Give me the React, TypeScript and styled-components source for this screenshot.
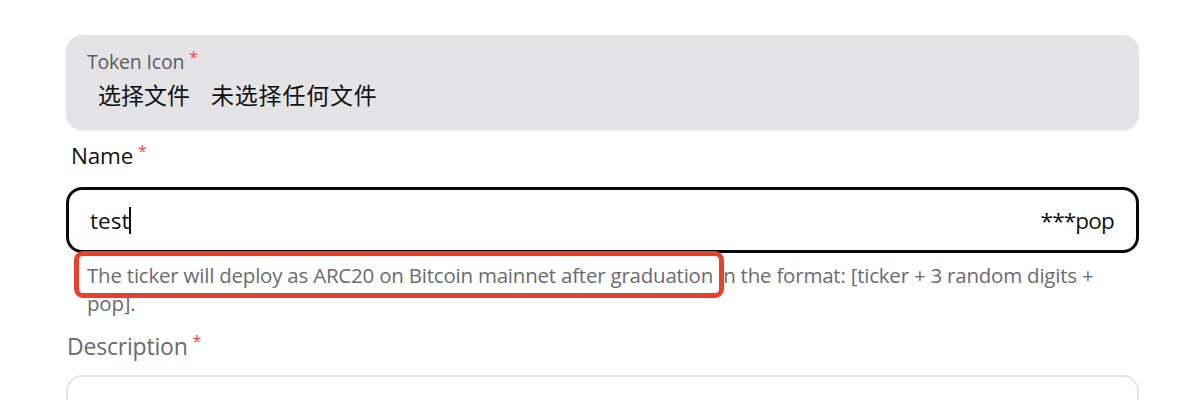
import React from "react";
import styled, { createGlobalStyle } from "styled-components";

const Global = createGlobalStyle`
  html, body { margin: 0; padding: 0; background: #ffffff; }
  body { font-family: "Open Sans", "Noto Sans", "Noto Sans CJK SC", sans-serif; }
`;

const Page = styled.div`
  padding: 35px 61px 0 66px;
  width: 1073px;
  display: flex;
  flex-direction: column;
`;

const UploadCard = styled.div`
  background: #e4e4e7;
  border-radius: 16px;
  height: 95px;
  box-sizing: border-box;
  padding: 14px 21px 0 21px;
  display: flex;
  flex-direction: column;
  box-shadow: 0 1px 2px rgba(0,0,0,0.06);
`;

const SmallLabel = styled.div`
  font-size: 19.5px;
  color: #5b5b60;
  line-height: 26px;
  letter-spacing: -0.2px;
`;

const Star = styled.span`
  color: #e5484d;
  font-size: 16px;
  vertical-align: top;
  margin-left: 5px;
  position: relative;
  top: -5px;
`;

const FileRow = styled.div`
  font-family: "Noto Sans CJK SC", sans-serif;
  font-size: 23px;
  color: #111;
  line-height: 34px;
  padding-left: 11px;
  margin-top: 2px;
  display: flex;
  gap: 21px;
`;

const FileName = styled.span`
  letter-spacing: 0.8px;
`;

const FieldLabel = styled.div<{ $muted?: boolean }>`
  font-size: ${(p) => (p.$muted ? "23px" : "22.5px")};
  color: ${(p) => (p.$muted ? "#6a6a70" : "#111")};
  line-height: 30px;
  letter-spacing: -0.2px;
  padding-left: ${(p) => (p.$muted ? "1px" : "5px")};
  margin-top: ${(p) => (p.$muted ? "14px" : "11px")};
`;

const InputBox = styled.div`
  margin-top: 16px;
  height: 66px;
  box-sizing: border-box;
  border: 3px solid #0a0a0a;
  border-radius: 16px;
  display: flex;
  align-items: center;
  justify-content: space-between;
  padding: 0 22px 0 21px;
  font-size: 22.5px;
  color: #111;
`;

const Typed = styled.span`
  display: inline-flex;
  align-items: center;
`;

const Suffix = styled.span`
  letter-spacing: -0.8px;
`;

const Caret = styled.span`
  display: inline-block;
  width: 1.5px;
  height: 27px;
  background: #111;
`;

const HelpWrap = styled.div`
  position: relative;
  margin-top: 8px;
  padding: 0 30px 0 21px;
`;

const HelpText = styled.p`
  margin: 0;
  font-size: 20.5px;
  line-height: 28px;
  color: #6b6b70;
  letter-spacing: -0.22px;
`;

const Highlight = styled.div`
  position: absolute;
  left: 8px;
  top: -10px;
  width: 650px;
  height: 47px;
  box-sizing: border-box;
  border: 5px solid #e8402a;
  border-radius: 9px;
  pointer-events: none;
`;

const TextArea = styled.div`
  margin-top: 14px;
  height: 80px;
  box-sizing: border-box;
  border: 2px solid #e4e4e6;
  border-radius: 16px;
`;

export default function App() {
  return (
    <>
      <Global />
      <Page>
        <UploadCard>
          <SmallLabel>
            Token Icon<Star>*</Star>
          </SmallLabel>
          <FileRow>
            <span>选择文件</span>
            <FileName>未选择任何文件</FileName>
          </FileRow>
        </UploadCard>
        <FieldLabel>
          Name<Star>*</Star>
        </FieldLabel>
        <InputBox>
          <Typed>
            test
            <Caret />
          </Typed>
          <Suffix>***pop</Suffix>
        </InputBox>
        <HelpWrap>
          <HelpText>
            The ticker will deploy as ARC20 on Bitcoin mainnet after graduation in the format: [ticker + 3 random digits + pop].
          </HelpText>
          <Highlight />
        </HelpWrap>
        <FieldLabel $muted>
          Description<Star>*</Star>
        </FieldLabel>
        <TextArea />
      </Page>
    </>
  );
}
